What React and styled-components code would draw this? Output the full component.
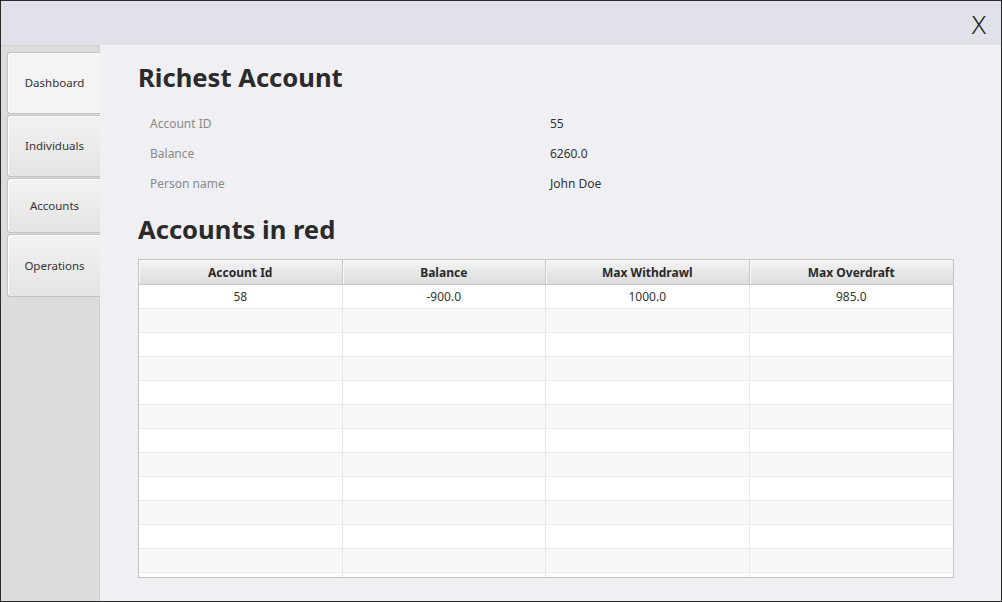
import React from "react";
import styled, { createGlobalStyle } from "styled-components";

const GlobalStyle = createGlobalStyle`
  html, body {
    margin: 0;
    padding: 0;
    background: #ffffff;
  }
  body {
    font-family: "Noto Sans", "Open Sans", sans-serif;
  }
`;

const tabs = ["Dashboard", "Individuals", "Accounts", "Operations"];
const tabHeights = [62, 62, 55, 63];

const info = [
  ["Account ID", "55"],
  ["Balance", "6260.0"],
  ["Person name", "John Doe"],
];

const columns = ["Account Id", "Balance", "Max Withdrawl", "Max Overdraft"];
const rows = [["58", "-900.0", "1000.0", "985.0"]];

function App() {
  const filler = Array.from({ length: 12 }, () => ["", "", "", ""]);
  const allRows = [...rows, ...filler];

  return (
    <>
      <GlobalStyle />
      <Window>
        <TitleBar>
          <Close>X</Close>
        </TitleBar>
        <Body>
          <Sidebar>
            {tabs.map((t, i) => (
              <Tab key={t} $h={tabHeights[i]} $active={i === 0}>
                {t}
              </Tab>
            ))}
          </Sidebar>
          <Main>
            <Heading>Richest Account</Heading>
            <InfoGrid>
              {info.map(([label, value]) => (
                <InfoRow key={label}>
                  <Label>{label}</Label>
                  <Value>{value}</Value>
                </InfoRow>
              ))}
            </InfoGrid>
            <Heading $second>Accounts in red</Heading>
            <Table>
              <HeaderRow>
                {columns.map((c) => (
                  <HeadCell key={c}>{c}</HeadCell>
                ))}
              </HeaderRow>
              <Rows>
                {allRows.map((r, i) => (
                  <Row key={i} $odd={i % 2 === 1}>
                    {r.map((v, j) => (
                      <Cell key={j}>{v}</Cell>
                    ))}
                  </Row>
                ))}
              </Rows>
            </Table>
          </Main>
        </Body>
      </Window>
    </>
  );
}

const Window = styled.div`
  width: 1002px;
  height: 602px;
  box-sizing: border-box;
  border: 1px solid #2b2b2b;
  display: flex;
  flex-direction: column;
  overflow: hidden;
`;

const TitleBar = styled.div`
  height: 44px;
  flex-shrink: 0;
  background: #e1e1ea;
  display: flex;
  justify-content: flex-end;
  align-items: center;
  padding-right: 15px;
`;

const Close = styled.span`
  font-family: "Noto Sans", sans-serif;
  font-size: 26px;
  font-weight: 300;
  color: #222;
  line-height: 1;
  margin-top: 2px;
`;

const Body = styled.div`
  flex: 1;
  display: flex;
  min-height: 0;
`;

const Sidebar = styled.div`
  width: 99px;
  flex-shrink: 0;
  background: #dcdcdc;
  border-top: 1px solid #cfcfcf;
  box-shadow: inset -1px 0 0 #cfcfcf;
  padding: 6px 0 0 6px;
  display: flex;
  flex-direction: column;
  gap: 1px;
  box-sizing: border-box;
`;

const Tab = styled.div`
  height: ${(p) => p.$h}px;
  box-sizing: border-box;
  margin-right: -1px;
  padding-bottom: 1px;
  border: 1px solid #c2c2c2;
  border-right: none;
  border-radius: 3px 0 0 3px;
  background: ${(p) =>
    p.$active
      ? "#f4f4f4"
      : "linear-gradient(to bottom, #f2f2f2, #e4e4e4)"};
  box-shadow: inset 1px 1px 0 #ffffff;
  display: flex;
  align-items: center;
  justify-content: center;
  font-size: 11.5px;
  color: #333;
`;

const Main = styled.div`
  flex: 1;
  background: #efeff4;
  padding: 16px 47px 0 38px;
  display: flex;
  flex-direction: column;
`;

const Heading = styled.h1`
  margin: ${(p) => (p.$second ? "15px 0 12px" : "0 0 13px")};
  font-size: 25.6px;
  font-weight: 700;
  color: #2a2a2a;
  line-height: 34px;
`;

const InfoGrid = styled.div`
  display: flex;
  flex-direction: column;
  padding-left: 12px;
`;

const InfoRow = styled.div`
  height: 30px;
  display: grid;
  grid-template-columns: 400px 1fr;
  align-items: center;
  font-size: 12px;
`;

const Label = styled.span`
  color: #8a8a8a;
`;

const Value = styled.span`
  color: #333;
`;

const Table = styled.div`
  height: 319px;
  box-sizing: border-box;
  border: 1px solid #c4c4c4;
  background: #ffffff;
  display: flex;
  flex-direction: column;
  overflow: hidden;
`;

const HeaderRow = styled.div`
  display: grid;
  grid-template-columns: repeat(4, 1fr);
  height: 24px;
  flex-shrink: 0;
  background: linear-gradient(to bottom, #f4f4f4, #dcdcdc);
  border-bottom: 1px solid #c8c8c8;
`;

const HeadCell = styled.div`
  display: flex;
  align-items: center;
  justify-content: center;
  font-size: 12px;
  font-weight: 700;
  color: #2a2a2a;
  border-right: 1px solid #c8c8c8;
  box-shadow: inset 1px 1px 0 #f8f8f8;
  &:last-child {
    border-right: none;
  }
`;

const Rows = styled.div`
  display: flex;
  flex-direction: column;
`;

const Row = styled.div`
  display: grid;
  grid-template-columns: repeat(4, 1fr);
  height: 24px;
  flex-shrink: 0;
  background: ${(p) => (p.$odd ? "#f8f8f8" : "#ffffff")};
  border-bottom: 1px solid #e9e9e9;
  box-sizing: border-box;
`;

const Cell = styled.div`
  display: flex;
  align-items: center;
  justify-content: center;
  font-size: 12px;
  color: #333;
  border-right: 1px solid #e9e9e9;
  &:last-child {
    border-right: none;
  }
`;

export default App;
